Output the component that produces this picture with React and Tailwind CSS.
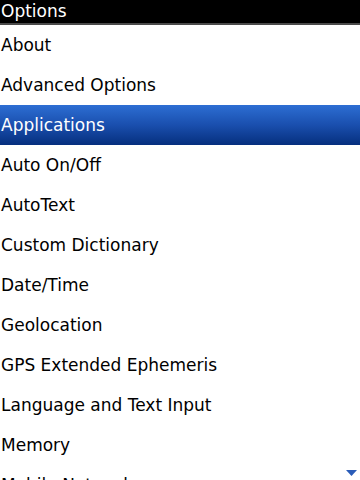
import React from "react";

const ITEMS = [
  "About",
  "Advanced Options",
  "Applications",
  "Auto On/Off",
  "AutoText",
  "Custom Dictionary",
  "Date/Time",
  "Geolocation",
  "GPS Extended Ephemeris",
  "Language and Text Input",
  "Memory",
  "Mobile Network",
];

const SELECTED = 2;

export default function App() {
  return (
    <div className="relative w-[360px] h-[480px] overflow-hidden bg-white font-['DejaVu_Sans',sans-serif]">
      {/* title bar */}
      <div className="h-[25px] bg-black border-b-2 border-[#4a4a4a] text-white text-[17px] leading-[22px] pl-px">
        Options
      </div>

      {/* options list */}
      <ul className="flex flex-col">
        {ITEMS.map((item, i) => (
          <li
            key={item}
            className={
              i === SELECTED
                ? "h-[40px] flex items-center pl-px pt-[2px] text-[17px] text-white bg-gradient-to-b from-[#2d6ed3] via-[#1a4fae] to-[#062f7e]"
                : "h-[40px] flex items-center pl-px pt-[2px] text-[17px] text-black"
            }
          >
            {item}
          </li>
        ))}
      </ul>

      {/* more-below indicator */}
      <svg
        className="absolute right-[3px] bottom-[4px]"
        width="11"
        height="6"
        viewBox="0 0 11 6"
      >
        <polygon points="0,0 11,0 5.5,6" fill="#2a5cb8" />
      </svg>
    </div>
  );
}
